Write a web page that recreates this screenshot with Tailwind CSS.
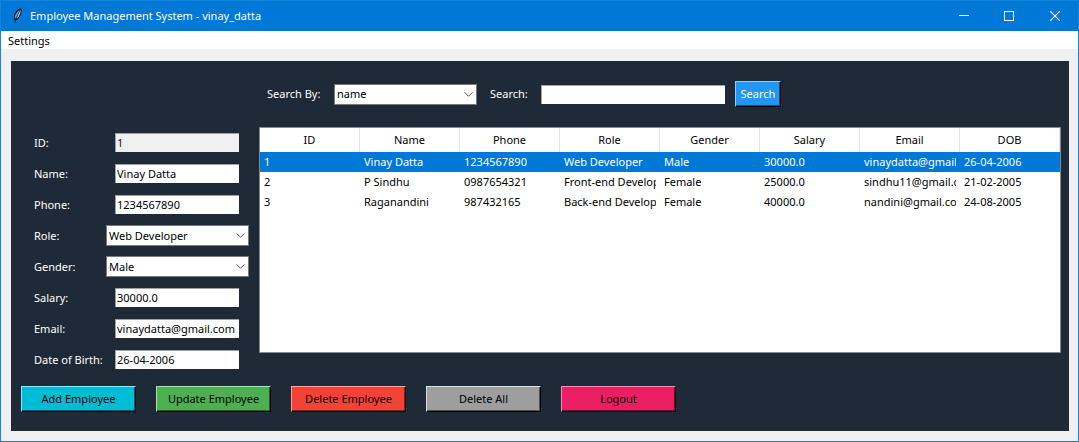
<!DOCTYPE html>
<html lang="en">
<head>
<meta charset="utf-8">
<title>Employee Management System - vinay_datta</title>
<script src="https://cdn.jsdelivr.net/npm/@tailwindcss/browser@4"></script>
</head>
<body class="flex min-h-screen flex-col border border-[#1883d7] bg-[#f0f0f0] font-['Noto_Sans',sans-serif] text-[11px] leading-4 text-black">
  <header class="flex h-[30px] shrink-0 items-center bg-[#0078d7] pl-2 text-white">
    <svg class="mr-[5px] h-4 w-4" viewBox="0 0 16 16" aria-hidden="true">
      <path d="M5.800 15.500 5.700 12C4.200 9.500 4.800 6 7 3.200 8.800 1 11 .1 12.200.7c1 1.200.4 4.500-.9 7C10.100 10.200 8.400 11.800 7 12.300Z" fill="#0d1722"/>
      <path d="M6 10C5.700 7.500 7.500 3.900 11 1.700 9.500 4.200 8.200 7 7 10.500Z" fill="#6fa4dc"/>
      <path d="M11.600 1.800C12 4.500 10.500 8.200 7.700 10.800L9.500 6Z" fill="#c4dcf4"/>
    </svg>
    <h1 class="flex-1">Employee Management System - vinay_datta</h1>
    <div class="flex h-full">
      <button aria-label="Minimize" class="flex w-[45px] items-center justify-center"><svg class="h-[10px] w-[10px]" viewBox="0 0 10 10" shape-rendering="crispEdges"><path d="M0 4.500H10" stroke="#fff"/></svg></button>
      <button aria-label="Maximize" class="flex w-[45px] items-center justify-center"><svg class="h-[10px] w-[10px]" viewBox="0 0 10 10" shape-rendering="crispEdges"><path d="M.5 .5H9.500V9.500H.5Z" fill="none" stroke="#fff"/></svg></button>
      <button aria-label="Close" class="flex w-[47px] items-center justify-center"><svg class="h-[10px] w-[10px]" viewBox="0 0 10 10"><path d="M0 0 10 10M10 0 0 10" stroke="#fff" stroke-width="1.100"/></svg></button>
    </div>
  </header>
  <nav class="flex h-[18px] shrink-0 items-end bg-white px-[7px]">
    <button class="leading-4">Settings</button>
  </nav>

  <main class="mt-3 mr-[9px] mb-[10px] ml-[10px] flex-1 bg-[#1e2a38] pt-5 pb-[19px] text-white">
    <form class="flex h-[26px] items-center pl-64">
      <label for="by" class="w-[67px]">Search By:</label>
      <div class="grid w-[143px] items-center">
        <select id="by" class="col-start-1 row-start-1 h-[21px] w-full appearance-none border border-[#7a7a7a] bg-white pl-[2px] text-black"><option>name</option><option>id</option><option>phone</option></select>
        <svg class="pointer-events-none col-start-1 row-start-1 mr-1 h-[5px] w-[9px] justify-self-end" viewBox="0 0 9 5"><path d="M.5 .3 4.500 4.300 8.500 .3" fill="none" stroke="#555"/></svg>
      </div>
      <label for="q" class="ml-[13px] w-[51px]">Search:</label>
      <input id="q" type="text" class="h-[19px] w-[184px] border-t border-l border-[#a0a0a0] bg-white px-[1px] pb-[2px] text-black">
      <button type="button" class="ml-[10px] h-[26px] w-[46px] border border-t-[#90caf9] border-r-black border-b-black border-l-[#90caf9] bg-[#2196f3] shadow-[inset_-1px_-1px_0_#114b7a]">Search</button>
    </form>

    <div class="mt-5 flex items-start pr-2 pl-[23px]">
      <form class="mr-[10px] grid w-[215px] shrink-0 auto-rows-[31px] grid-cols-[1fr_143px] items-center">
        <label for="id">ID:</label>
        <input id="id" type="text" readonly value="1" class="ml-[9px] h-[19px] w-[124px] border-t border-l border-[#a0a0a0] bg-[#f0f0f0] px-[1px] pb-[2px] text-[#2b0a3d]">
        <label for="name">Name:</label>
        <input id="name" type="text" value="Vinay Datta" class="ml-[9px] h-[19px] w-[124px] border-t border-l border-[#a0a0a0] bg-white px-[1px] pb-[2px] text-black">
        <label for="phone">Phone:</label>
        <input id="phone" type="text" value="1234567890" class="ml-[9px] h-[19px] w-[124px] border-t border-l border-[#a0a0a0] bg-white px-[1px] pb-[2px] text-black">
        <label for="role">Role:</label>
        <div class="grid items-center">
          <select id="role" class="col-start-1 row-start-1 h-[21px] w-full appearance-none border border-[#7a7a7a] bg-white pl-[2px] text-black"><option>Web Developer</option><option>Front-end Developer</option><option>Back-end Developer</option></select>
          <svg class="pointer-events-none col-start-1 row-start-1 mr-1 h-[5px] w-[9px] justify-self-end" viewBox="0 0 9 5"><path d="M.5 .3 4.500 4.300 8.500 .3" fill="none" stroke="#555"/></svg>
        </div>
        <label for="gender">Gender:</label>
        <div class="grid items-center">
          <select id="gender" class="col-start-1 row-start-1 h-[21px] w-full appearance-none border border-[#7a7a7a] bg-white pl-[2px] text-black"><option>Male</option><option>Female</option></select>
          <svg class="pointer-events-none col-start-1 row-start-1 mr-1 h-[5px] w-[9px] justify-self-end" viewBox="0 0 9 5"><path d="M.5 .3 4.500 4.300 8.500 .3" fill="none" stroke="#555"/></svg>
        </div>
        <label for="salary">Salary:</label>
        <input id="salary" type="text" value="30000.0" class="ml-[9px] h-[19px] w-[124px] border-t border-l border-[#a0a0a0] bg-white px-[1px] pb-[2px] text-black">
        <label for="email">Email:</label>
        <input id="email" type="text" value="vinaydatta@gmail.com" class="ml-[9px] h-[19px] w-[124px] border-t border-l border-[#a0a0a0] bg-white px-[1px] pb-[2px] text-black">
        <label for="dob" class="whitespace-nowrap">Date of Birth:</label>
        <input id="dob" type="text" value="26-04-2006" class="ml-[9px] h-[19px] w-[124px] border-t border-l border-[#a0a0a0] bg-white px-[1px] pb-[2px] text-black">
      </form>

      <div class="min-h-[226px] min-w-0 flex-1 border border-[#828790] bg-white text-black">
        <table class="w-full table-fixed border-separate border-spacing-0 whitespace-nowrap [&_td]:px-1 [&_td]:py-0 [&_th]:border-r [&_th]:border-[#e5e5e5] [&_th]:p-0 [&_th]:font-normal">
          <thead>
            <tr class="h-6"><th>ID</th><th>Name</th><th>Phone</th><th>Role</th><th>Gender</th><th>Salary</th><th>Email</th><th>DOB</th></tr>
          </thead>
          <tbody>
            <tr class="h-5 bg-[#0078d7] text-white">
              <td>1</td><td>Vinay Datta</td><td>1234567890</td><td><div class="overflow-hidden">Web Developer</div></td><td>Male</td><td>30000.0</td><td><div class="overflow-hidden">vinaydatta@gmail.com</div></td><td>26-04-2006</td>
            </tr>
            <tr class="h-5">
              <td>2</td><td>P Sindhu</td><td>0987654321</td><td><div class="overflow-hidden">Front-end Developer</div></td><td>Female</td><td>25000.0</td><td><div class="overflow-hidden">sindhu11@gmail.com</div></td><td>21-02-2005</td>
            </tr>
            <tr class="h-5">
              <td>3</td><td>Raganandini</td><td>987432165</td><td><div class="overflow-hidden">Back-end Developer</div></td><td>Female</td><td>40000.0</td><td><div class="overflow-hidden">nandini@gmail.com</div></td><td>24-08-2005</td>
            </tr>
          </tbody>
        </table>
      </div>
    </div>

    <div class="mt-[11px] flex gap-5 pl-[10px] text-black">
      <button class="h-[26px] w-[115px] border border-t-[#80f0ff] border-r-black border-b-black border-l-[#80f0ff] bg-[#00bcd4] shadow-[inset_-1px_-1px_0_#005e6a]">Add Employee</button>
      <button class="h-[26px] w-[115px] border border-t-[#a0e8a3] border-r-black border-b-black border-l-[#a0e8a3] bg-[#4caf50] shadow-[inset_-1px_-1px_0_#265828]">Update Employee</button>
      <button class="h-[26px] w-[115px] border border-t-[#faa19a] border-r-black border-b-black border-l-[#faa19a] bg-[#f44336] shadow-[inset_-1px_-1px_0_#7a221b]">Delete Employee</button>
      <button class="h-[26px] w-[115px] border border-t-[#dedede] border-r-black border-b-black border-l-[#dedede] bg-[#9e9e9e] shadow-[inset_-1px_-1px_0_#4f4f4f]">Delete All</button>
      <button class="h-[26px] w-[115px] border border-t-[#f48fb1] border-r-black border-b-black border-l-[#f48fb1] bg-[#e91e63] shadow-[inset_-1px_-1px_0_#750f32]">Logout</button>
    </div>
  </main>
</body>
</html>
